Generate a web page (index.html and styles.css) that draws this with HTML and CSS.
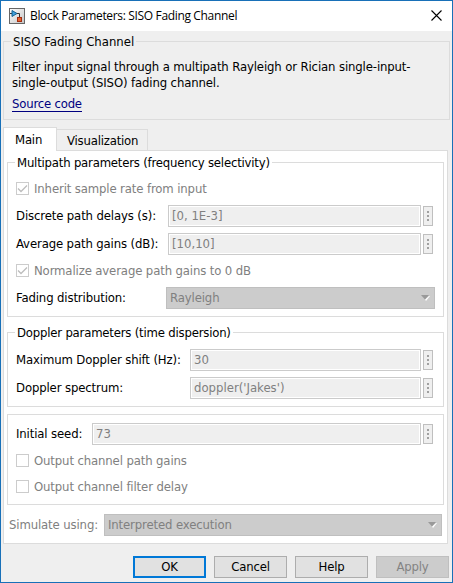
FILE: index.html
```html
<!DOCTYPE html>
<html lang="en">
<head>
<meta charset="utf-8">
<title>Block Parameters: SISO Fading Channel</title>
<link rel="stylesheet" href="styles.css">
</head>
<body>
<div class="dialog">
  <header class="titlebar">
    <svg class="app-icon" width="16" height="16" viewBox="0 0 16 16">
      <defs><linearGradient id="g" x1="0" y1="0" x2="1" y2="1"><stop offset="0" stop-color="#fff"/><stop offset="1" stop-color="#c4c4c4"/></linearGradient></defs>
      <rect x=".5" y=".5" width="15" height="15" fill="url(#g)" stroke="#666"/>
      <path d="M1 5.500H3M8 5.500H10.500V9" fill="none" stroke="#333"/>
      <path d="M3 2.500L8 5.500L3 8.500Z" fill="#3fa0dc" stroke="#14608f"/>
      <rect x="8.500" y="9.500" width="4" height="4" fill="#e8622c" stroke="#a32d10"/>
    </svg>
    <h1 class="title">Block Parameters: SISO Fading Channel</h1>
    <svg class="close" width="11" height="11" viewBox="0 0 11 11"><path d="M.5 .5L10.500 10.500M10.500 .5L.5 10.500" stroke="#000" stroke-width="1.100"/></svg>
  </header>

  <section class="group about">
    <div class="legend"><span>SISO Fading Channel</span></div>
    <p class="desc">Filter input signal through a multipath Rayleigh or Rician single-input-<br>single-output (SISO) fading channel.</p>
    <a class="link">Source code</a>
  </section>

  <nav class="tabs">
    <div class="tab active">Main</div>
    <div class="tab">Visualization</div>
  </nav>

  <main class="pane">
    <section class="group multipath">
      <div class="legend"><span>Multipath parameters (frequency selectivity)</span></div>
      <div class="check"><span class="box"><svg width="11" height="11" viewBox="0 0 11 11"><path d="M1 5.500L4 8.500L10 2.500"/></svg></span><span>Inherit sample rate from input</span></div>
      <div class="row delays"><span class="label">Discrete path delays (s):</span><span class="edit">[0, 1E-3]</span><span class="more"><i></i><i></i><i></i></span></div>
      <div class="row"><span class="label">Average path gains (dB):</span><span class="edit">[10,10]</span><span class="more"><i></i><i></i><i></i></span></div>
      <div class="check normalize"><span class="box"><svg width="11" height="11" viewBox="0 0 11 11"><path d="M1 5.500L4 8.500L10 2.500"/></svg></span><span>Normalize average path gains to 0 dB</span></div>
      <div class="row fading"><span class="label">Fading distribution:</span><span class="select">Rayleigh<svg width="9" height="6" viewBox="0 0 9 6"><path d="M8 1L9 1L5 6L4 4.500Z" fill="#fff"/><path d="M0 0H8L4 4.500Z" fill="#999"/></svg></span></div>
    </section>

    <section class="group doppler">
      <div class="legend"><span>Doppler parameters (time dispersion)</span></div>
      <div class="row"><span class="label">Maximum Doppler shift (Hz):</span><span class="edit">30</span><span class="more"><i></i><i></i><i></i></span></div>
      <div class="row"><span class="label">Doppler spectrum:</span><span class="edit">doppler('Jakes')</span><span class="more"><i></i><i></i><i></i></span></div>
    </section>

    <section class="group output">
      <div class="row"><span class="label">Initial seed:</span><span class="edit">73</span><span class="more"><i></i><i></i><i></i></span></div>
      <div class="check gains"><span class="box"></span><span>Output channel path gains</span></div>
      <div class="check delay"><span class="box"></span><span>Output channel filter delay</span></div>
    </section>

    <div class="simulate"><span class="label">Simulate using:</span><span class="select">Interpreted execution<svg width="9" height="6" viewBox="0 0 9 6"><path d="M8 1L9 1L5 6L4 4.500Z" fill="#fff"/><path d="M0 0H8L4 4.500Z" fill="#999"/></svg></span></div>
  </main>

  <footer class="buttons">
    <button class="btn default">OK</button>
    <button class="btn">Cancel</button>
    <button class="btn">Help</button>
    <button class="btn disabled">Apply</button>
  </footer>
</div>
</body>
</html>
```

FILE: styles.css
```css
* { box-sizing: border-box; }
body { margin: 0; }
.dialog {
  width: 453px;
  height: 583px;
  border: 1px solid #1870b8;
  background: #efefef;
  color: #000;
  font: 13px/16px "DejaVu Sans Condensed", "DejaVu Sans", sans-serif;
  font-stretch: condensed;
  letter-spacing: -0.13px;
  white-space: nowrap;
}
.titlebar { display: flex; align-items: center; height: 30px; padding: 0 10px 0 8px; background: #fff; }
.app-icon { display: block; margin-right: 5px; }
.title { flex: 1; margin: 0; font: 12px/16px "Open Sans", sans-serif; letter-spacing: -0.34px; }
.close { display: block; margin-bottom: 2px; }

.group { border: 1px solid #dcdcdc; }
.legend { height: 16px; margin: -8px 0 0 7px; letter-spacing: -0.2px; }
.legend span { display: inline-block; background: #fff; padding: 0 2px; }
.about { height: 79px; margin: 10px 2px 0; }
.about .legend { letter-spacing: 0; }
.about .legend span { background: #efefef; }
.desc { margin: 9px 0 0 8px; }
.link { display: inline-block; margin: 6px 0 0 8px; color: #000080; border-bottom: 1px solid #000080; line-height: 14px; letter-spacing: -0.2px; }

.tabs { display: flex; align-items: flex-end; height: 23px; margin: 7px 0 0 2px; letter-spacing: -0.2px; }
.tab { width: 91px; height: 21px; padding: 3px 0 0 10px; border: 1px solid #dcdcdc; border-left: 0; border-bottom: 0; }
.tab.active { position: relative; width: 54px; height: 24px; margin-bottom: -1px; padding: 4px 0 0 11px; border-left: 1px solid #dcdcdc; background: #fff; }

.pane { height: 394px; margin: 0 4px 0 2px; padding: 11px 3px 0; border: 1px solid #dcdcdc; background: #fff; }
.pane .group { padding: 0 8px; }
.pane .legend { margin-left: -1px; }
.multipath { height: 155px; }
.doppler { height: 75px; margin-top: 15px; }
.output { height: 91px; margin-top: 7px; }

.row { display: flex; align-items: center; height: 22px; margin-top: 6px; padding-right: 2px; }
.multipath .label { width: 152px; }
.doppler .label { width: 174px; }
.output .label { width: 76px; }
.delays { margin-top: 10px; }
.doppler .legend + .row, .output .row { margin-top: 8px; }
.edit { flex: 1; height: 22px; padding: 2px 0 0 3px; border: 1px solid #cbcbcb; background: #efefef; box-shadow: inset 0 0 0 1px #fff; color: #808080; letter-spacing: 0; }
.more { display: flex; flex-direction: column; align-items: center; gap: 2px; width: 10px; height: 20px; margin-left: 2px; padding-top: 4px; border: 1px solid #bfbfbf; background: #efefef; }
.more i { width: 2px; height: 2px; background: #a0a0a0; }

.check { display: flex; align-items: center; height: 13px; color: #808080; }
.legend + .check { margin-top: 11px; }
.normalize { margin-top: 9px; }
.gains { margin-top: 9px; }
.delay { margin-top: 13px; }
.box { width: 13px; height: 13px; margin-right: 5px; border: 1px solid #ccc; background: #fff; }
.box svg { display: block; }
.box path { fill: none; stroke: #bdbdbd; stroke-width: 1.3; }

.fading { margin-top: 10px; padding-right: 0; }
.multipath .fading .label { width: 150px; }
.select { display: flex; align-items: center; justify-content: space-between; flex: 1; height: 22px; padding: 0 4px 0 3px; border: 1px solid #bfbfbf; background: #ccc; color: #808080; }
.simulate { display: flex; align-items: center; margin: 9px 2px 0; color: #808080; }
.simulate .label { width: 95px; }

.buttons { display: flex; justify-content: flex-end; gap: 8px; margin: 12px 3px 0 0; }
.btn { width: 73px; height: 22px; padding: 0; border: 1px solid #adadad; background: #e1e1e1; color: #000; font: inherit; letter-spacing: -0.2px; }
.default { border: 2px solid #0078d7; }
.disabled { border-color: #bfbfbf; background: #ccc; color: #838383; }
```
